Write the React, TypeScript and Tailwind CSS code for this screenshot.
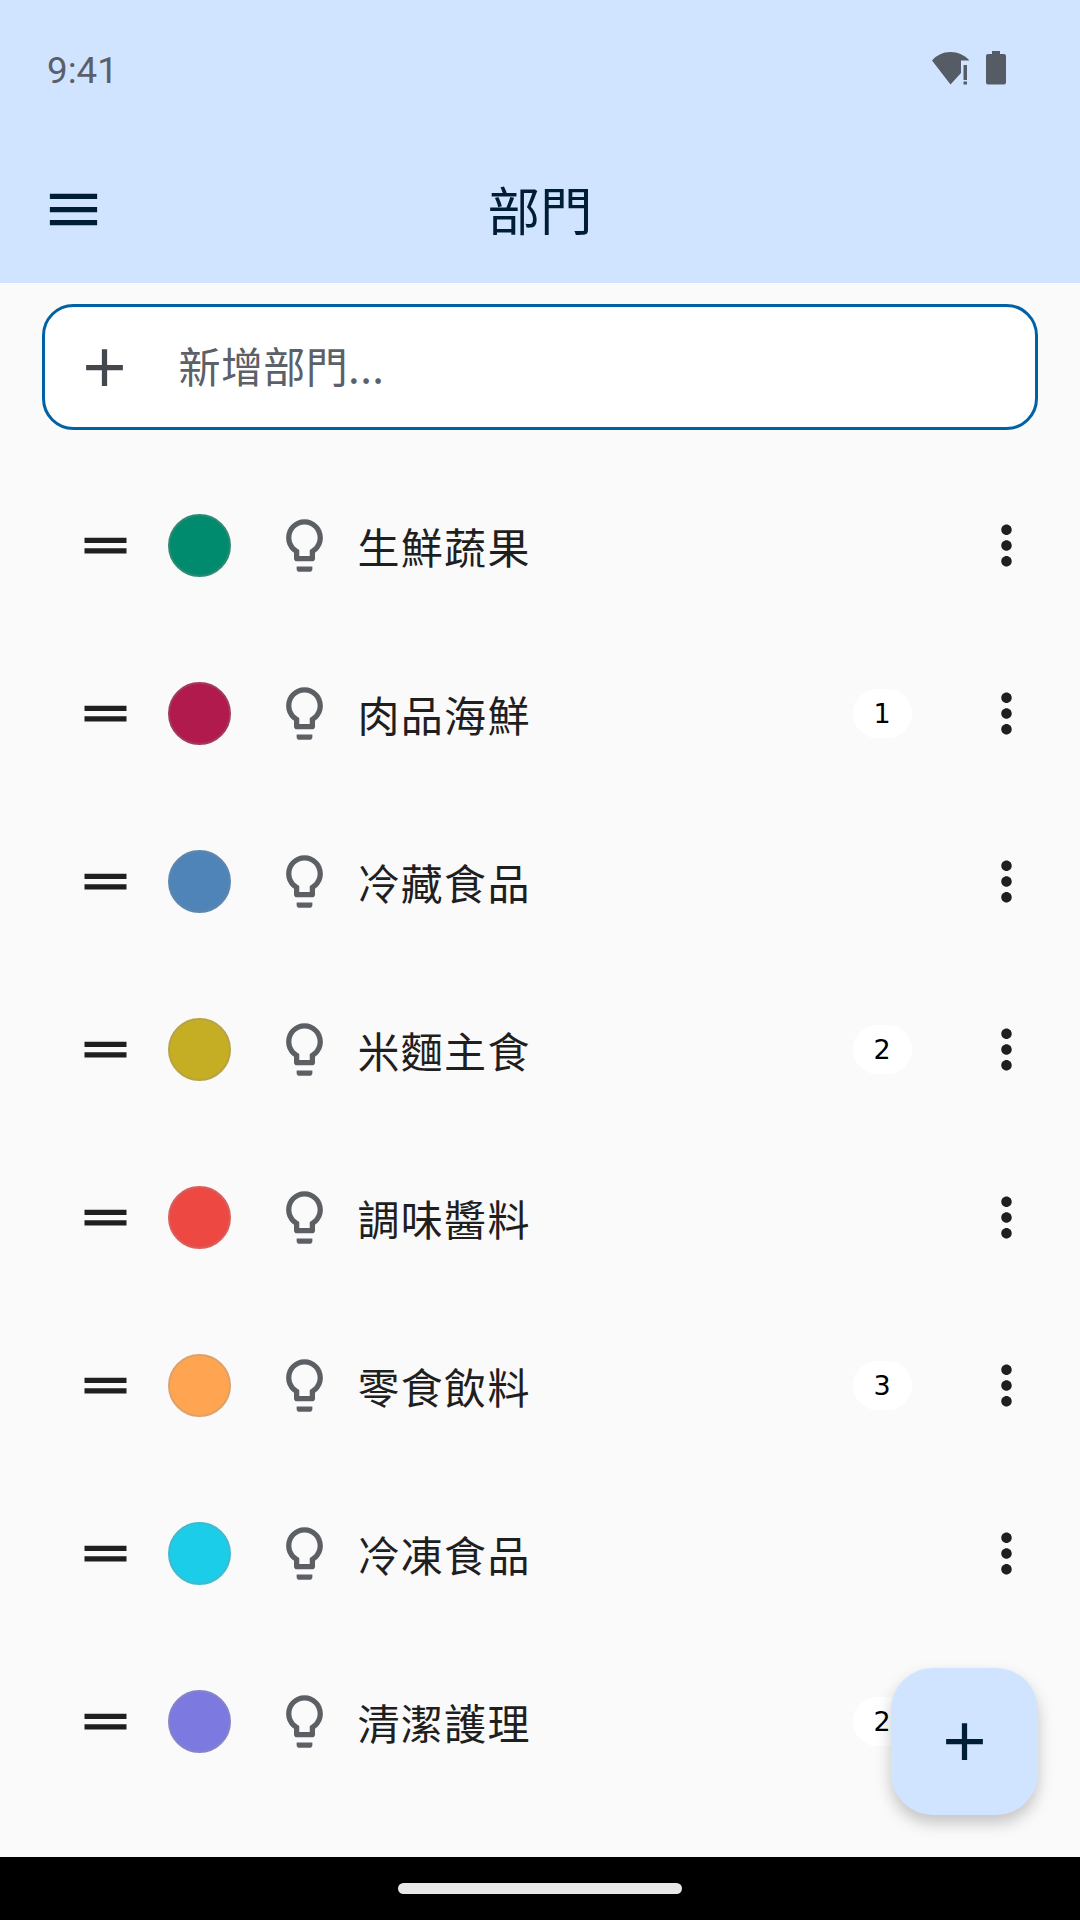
const CJK = "font-['Noto_Sans_CJK_TC','Noto_Sans_CJK_SC',sans-serif]";

const rows = [
  { name: "生鮮蔬果", color: "bg-[#008b6e]", ring: "border-[#2f8a75]", count: "" },
  { name: "肉品海鮮", color: "bg-[#b01a4d]", ring: "border-[#a23a60]", count: "1" },
  { name: "冷藏食品", color: "bg-[#4f84b8]", ring: "border-[#5f86ad]", count: "" },
  { name: "米麵主食", color: "bg-[#c5ae24]", ring: "border-[#b5a443]", count: "2" },
  { name: "調味醬料", color: "bg-[#ee4843]", ring: "border-[#d8605c]", count: "" },
  { name: "零食飲料", color: "bg-[#ffa552]", ring: "border-[#e0a068]", count: "3" },
  { name: "冷凍食品", color: "bg-[#1bcde9]", ring: "border-[#40bacd]", count: "" },
  { name: "清潔護理", color: "bg-[#7c79e0]", ring: "border-[#8583c9]", count: "2" },
];

function Icon({ d, className }: { d: string; className: string }) {
  return (
    <svg viewBox="0 0 24 24" className={className} fill="currentColor">
      <path d={d} />
    </svg>
  );
}

const BULB =
  "M9 21c0 .55.45 1 1 1h4c.55 0 1-.45 1-1v-1H9v1zm3-19C8.14 2 5 5.14 5 9c0 2.38 1.19 4.47 3 5.74V17c0 .55.45 1 1 1h6c.55 0 1-.45 1-1v-2.26c1.81-1.27 3-3.36 3-5.74 0-3.86-3.14-7-7-7zm2.85 11.1l-.85.6V16h-4v-2.3l-.85-.6C7.8 12.16 7 10.63 7 9c0-2.76 2.24-5 5-5s5 2.24 5 5c0 1.63-.8 3.16-2.15 4.1z";
const DRAG = "M20 9H4v2h16V9zM4 15h16v-2H4v2z";
const MORE =
  "M12 8c1.1 0 2-.9 2-2s-.9-2-2-2-2 .9-2 2 .9 2 2 2zm0 2c-1.1 0-2 .9-2 2s.9 2 2 2 2-.9 2-2-.9-2-2-2zm0 6c-1.1 0-2 .9-2 2s.9 2 2 2 2-.9 2-2-.9-2-2-2z";
const PLUS = "M19 13h-6v6h-2v-6H5v-2h6V5h2v6h6v2z";
const MENU = "M3 18h18v-2H3v2zm0-5h18v-2H3v2zm0-7v2h18V6H3z";

function Row({ name, color, ring, count }: (typeof rows)[number]) {
  return (
    <div className="flex h-[168px] items-center pl-[73.5px] pr-[42.5px]">
      <Icon d={DRAG} className="h-[63px] w-[63px] shrink-0 text-[#1f1f1f]" />
      <div className={`ml-[31.5px] h-[63px] w-[63px] shrink-0 rounded-full border-2 ${color} ${ring}`} />
      <Icon d={BULB} className="ml-[42px] h-[63px] w-[63px] shrink-0 text-[#5c6065]" />
      <div className={`ml-[21.5px] flex-1 text-[42px] leading-[63px] tracking-[1.3px] text-[#1f1f1f] ${CJK}`}>
        {name}
      </div>
      {count && (
        <div className="flex h-[49px] w-[59px] items-center justify-center rounded-full bg-white pt-[2px] font-['DejaVu_Sans',sans-serif] text-[27px] text-black">
          {count}
        </div>
      )}
      <Icon d={MORE} className="ml-[63px] h-[63px] w-[63px] shrink-0 text-[#1f1f1f]" />
    </div>
  );
}

export default function App() {
  return (
    <div className="relative flex h-[1920px] w-[1080px] flex-col overflow-hidden bg-[#fafafa]">
      <header className="h-[283px] shrink-0 bg-[#d1e4ff]">
        <div className="flex h-[138px] items-center justify-between pl-[47px] pr-[74px]">
          <span className="mt-[4px] font-['Roboto',sans-serif] text-[36.75px] text-[#5a606a]">9:41</span>
          <div className="mb-[2px] flex items-center gap-[16px]">
            <svg viewBox="0 0 38 33" className="h-[33px] w-[38px] text-[#565c66]" fill="currentColor">
              <path d="M0 8.5C5 3 11 0 18.500 0C26 0 32.500 3 37.500 8.500H29V21L18.500 32.500Z" />
              <rect x="31.500" y="13" width="3.500" height="15" />
              <rect x="31.500" y="29.500" width="3.500" height="3" />
            </svg>
            <svg viewBox="0 0 20 34" className="h-[34px] w-[20px] text-[#565c66]" fill="currentColor">
              <path d="M6 0H14V3H18C19.100 3 20 3.900 20 5V31.500C20 32.600 19.100 33.500 18 33.500H2C.9 33.500 0 32.600 0 31.500V5C0 3.900 .9 3 2 3H6Z" />
            </svg>
          </div>
        </div>
        <div className="relative flex h-[147px] items-center justify-center pb-[7px]">
          <Icon d={MENU} className="absolute left-[42px] top-[40px] h-[63px] w-[63px] text-[#001d36]" />
          <h1 className={`text-[52.5px] font-normal leading-[70px] text-[#001d36] ${CJK}`}>部門</h1>
        </div>
      </header>
      <div className="mx-[42px] mt-[21px] flex h-[126px] shrink-0 items-center rounded-[31.5px] border-[3px] border-[#0061a4] bg-white pl-[28px]">
        <Icon d={PLUS} className="h-[63px] w-[63px] shrink-0 text-[#43474e]" />
        <span className={`ml-[42.5px] pb-[6px] text-[42px] tracking-[0.4px] text-[#5c6068] ${CJK}`}>新增部門...</span>
      </div>
      <div className="mt-[31px]">
        {rows.map((r) => (
          <Row key={r.name} {...r} />
        ))}
      </div>
      <button className="absolute left-[891px] top-[1668px] flex h-[147px] w-[147px] items-center justify-center rounded-[42px] bg-[#d1e4ff] shadow-[0_8px_16px_rgba(0,0,0,0.22)]">
        <Icon d={PLUS} className="h-[63px] w-[63px] text-[#001d36]" />
      </button>
      <div className="mt-auto flex h-[63px] shrink-0 items-center justify-center bg-black">
        <div className="h-[10.500px] w-[284px] rounded-full bg-[#e8e8e8]" />
      </div>
    </div>
  );
}
